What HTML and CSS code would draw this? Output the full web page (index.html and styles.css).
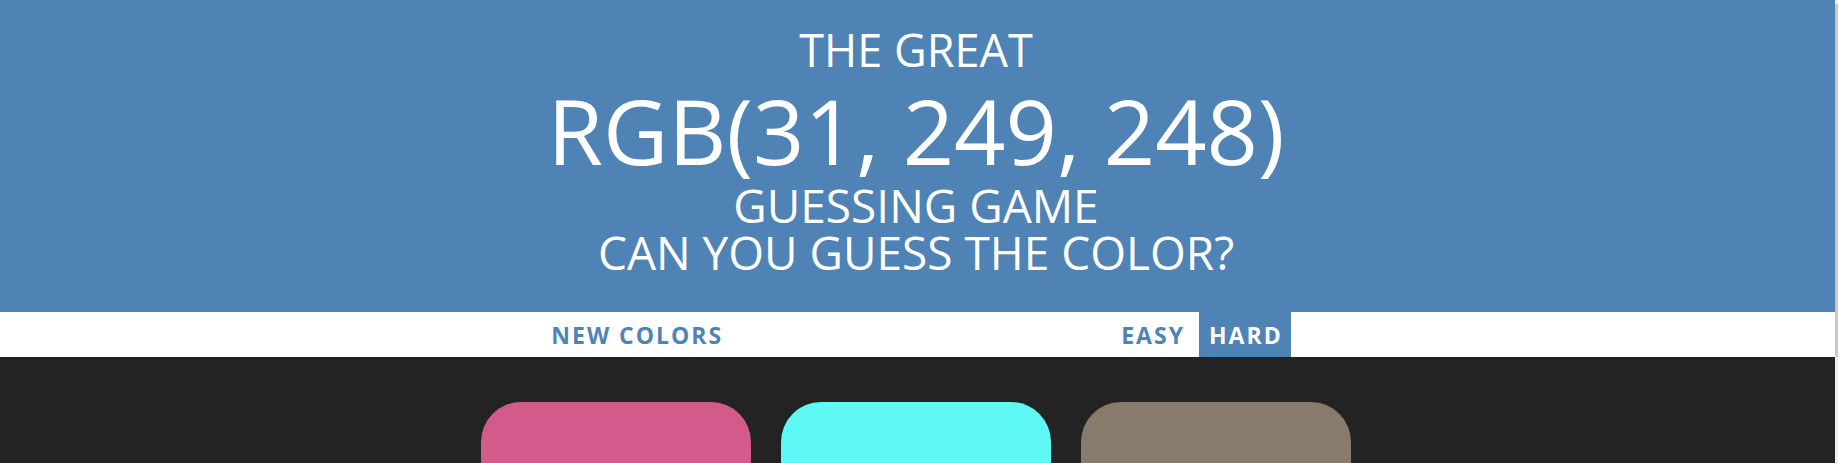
FILE: index.html
```html
<!DOCTYPE html>
<html lang="en">
<head>
<meta charset="utf-8">
<title>Color Game</title>
<link rel="stylesheet" href="styles.css">
</head>
<body>
<div class="page">
  <header class="banner">
    <div class="line line-top">The Great</div>
    <div class="line line-rgb">RGB(31, 249, 248)</div>
    <div class="line line-mid">Guessing Game</div>
    <div class="line line-bottom">Can you guess the color?</div>
  </header>
  <nav class="stripe">
    <button class="btn btn-new">New Colors</button>
    <span class="message"></span>
    <button class="btn btn-mode">Easy</button>
    <button class="btn btn-mode selected">Hard</button>
  </nav>
  <section class="board-wrap">
    <main class="board">
      <div class="square sq-pink"></div>
      <div class="square sq-cyan"></div>
      <div class="square sq-brown"></div>
    </main>
  </section>
</div>
<div class="scrollbar"><div class="thumb"></div></div>
</body>
</html>
```
FILE: styles.css
```css
* { box-sizing: border-box; }

html, body {
  margin: 0;
  padding: 0;
}

body {
  background: #232323;
  font-family: "Open Sans", "Noto Sans", sans-serif;
  overflow: hidden;
}

.page {
  margin-right: 3px;
}

.banner {
  background: #4f83b5;
  color: #ffffff;
  text-align: center;
  text-transform: uppercase;
  padding: 21px 3px 36px 0;
}

.line {
  font-weight: 400;
  white-space: nowrap;
}

.line-top {
  font-size: 45px;
  line-height: 58px;
}

.line-rgb {
  font-size: 90px;
  line-height: 103px;
}

.line-mid,
.line-bottom {
  font-size: 46px;
  line-height: 47px;
}

.stripe {
  background: #ffffff;
  height: 45px;
  display: flex;
  justify-content: center;
  align-items: stretch;
  padding-right: 3px;
}

.btn {
  border: none;
  background: none;
  font-family: "Open Sans", "Noto Sans", sans-serif;
  font-weight: 700;
  font-size: 23px;
  letter-spacing: 2px;
  text-transform: uppercase;
  color: #4f83b5;
  padding: 0 8px 0 10px;
  margin: 0;
  height: 45px;
  cursor: pointer;
}

.btn.selected {
  background: #4f83b5;
  color: #ffffff;
}

.btn-mode + .btn-mode {
  margin-left: 6px;
}

.message {
  width: 380px;
}

.board-wrap {
  padding-right: 3px;
}

.board {
  width: 900px;
  margin: 30px auto 0;
  display: flex;
}

.square {
  width: 270px;
  height: 270px;
  margin: 15px;
  border-radius: 40px;
}

.sq-pink { background: #d25b8c; }
.sq-cyan { background: #5ef8f5; }
.sq-brown { background: #897b6b; }

.scrollbar {
  position: fixed;
  top: 0;
  right: 0;
  bottom: 0;
  width: 3px;
  background: #f0f0f0;
}

.thumb {
  margin-top: 4px;
  height: 353px;
  background: #c9c9c9;
}
```
